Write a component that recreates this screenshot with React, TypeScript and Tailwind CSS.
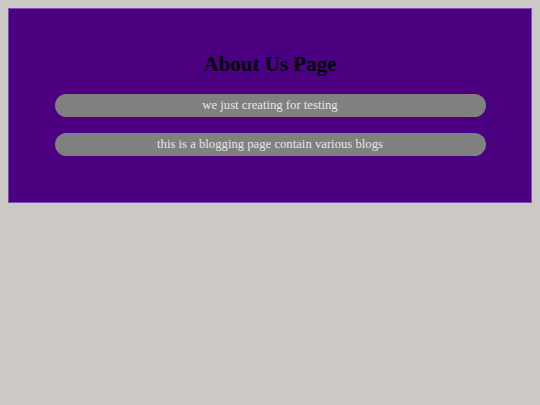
export default function App() {
  return (
    <div className="min-h-[405px] bg-[#cbc8c5] p-2" style={{ fontFamily: '"Liberation Serif", serif' }}>
      <div className="flex h-[195px] w-[524px] flex-col items-center border border-[#7d4fb0] bg-[#4b0082] pt-[43px]">
        <h1 className="font-['Liberation_Serif',serif] text-[21px] font-bold leading-[25px] text-black">About Us Page</h1>
        <div className="mt-[17px] flex w-[431px] flex-col gap-[16px]">
          <p className="flex h-[23px] items-center justify-center rounded-full bg-[#808080] font-['Liberation_Serif',serif] text-[12.7px] text-[#e6e6e6]">
            we just creating for testing
          </p>
          <p className="flex h-[23px] items-center justify-center rounded-full bg-[#808080] font-['Liberation_Serif',serif] text-[12.7px] text-[#e6e6e6]">
            this is a blogging page contain various blogs
          </p>
        </div>
      </div>
    </div>
  )
}
